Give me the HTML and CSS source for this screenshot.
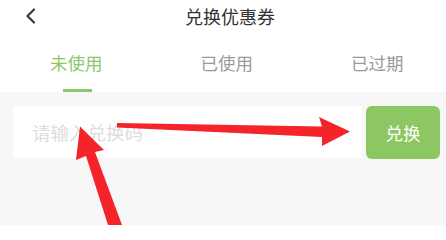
FILE: index.html
```html
<!DOCTYPE html>
<html lang="zh">
<head>
<meta charset="utf-8">
<link rel="stylesheet" href="styles.css">
</head>
<body>
<div class="page">
  <header class="header">
    <div class="back">
      <svg width="14" height="16" viewBox="0 0 14 16"><polyline points="10,1.5 3.5,8 10,14.5" fill="none" stroke="#3a3a3a" stroke-width="2.2" stroke-linecap="round" stroke-linejoin="round"/></svg>
    </div>
    <h1 class="title">兑换优惠券</h1>
    <div></div>
  </header>
  <nav class="tabs">
    <div class="tab active"><span class="tab-label">未使用</span><span class="tab-line"></span></div>
    <div class="tab"><span class="tab-label">已使用</span><span class="tab-line"></span></div>
    <div class="tab"><span class="tab-label">已过期</span><span class="tab-line"></span></div>
  </nav>
  <main class="content">
    <div class="redeem">
      <div class="code-input">请输入兑换码</div>
      <button class="redeem-btn">兑换</button>
    </div>
  </main>
  <svg class="arrows" width="446" height="225" viewBox="0 0 446 225">
    <polygon points="117,123 322,126.5 319,117 350,131.5 322,146 322,137 117,127.5" fill="#f5242a"/>
    <polygon points="80,126.5 104,150 95,152 122,225 108,225 86,156 76,160" fill="#f5242a"/>
  </svg>
</div>
</body>
</html>
```
FILE: styles.css
```css
* { box-sizing: border-box; }
html, body { margin: 0; padding: 0; }
body {
  font-family: "Noto Sans CJK SC", "Noto Sans", sans-serif;
  background: #ffffff;
  width: 446px;
  height: 225px;
  overflow: hidden;
}
.page { position: relative; width: 446px; height: 225px; display: flex; flex-direction: column; }
.header {
  height: 34px;
  display: grid;
  grid-template-columns: 1fr auto 1fr;
  align-items: start;
  padding-top: 4px;
}
.back { padding-left: 24px; padding-top: 4px; display: flex; }
.title {
  margin: 0 0 0 14px;
  font-size: 18px;
  font-weight: 400;
  color: #333333;
  line-height: 24px;
}
.tabs {
  display: flex;
  gap: 98px;
  padding-left: 50px;
  padding-top: 17px;
}
.tab { display: flex; flex-direction: column; align-items: center; }
.tab-label {
  font-size: 17.5px;
  line-height: 24px;
  color: #9a9a9a;
  white-space: nowrap;
}
.tab-line { width: 29px; height: 3px; margin-top: 14px; background: transparent; margin-left: 3px; }
.tab.active .tab-label { color: #8cc66a; }
.tab.active .tab-line { background: #8cc66a; }
.content {
  flex: 1;
  background: #f7f7f7;
  padding: 14px 6px 0 13px;
}
.redeem { display: flex; gap: 4px; align-items: stretch; }
.code-input {
  flex: 1;
  height: 52px;
  background: #ffffff;
  display: flex;
  align-items: center;
  padding-left: 19px;
  font-size: 18.5px;
  color: #dddddd;
}
.redeem-btn {
  width: 74px;
  height: 53px;
  border: none;
  border-radius: 6px;
  background: #8cc763;
  color: #ffffff;
  font-family: inherit;
  font-size: 17.5px;
  padding: 0;
}
.arrows { position: absolute; left: 0; top: 0; pointer-events: none; }
```
